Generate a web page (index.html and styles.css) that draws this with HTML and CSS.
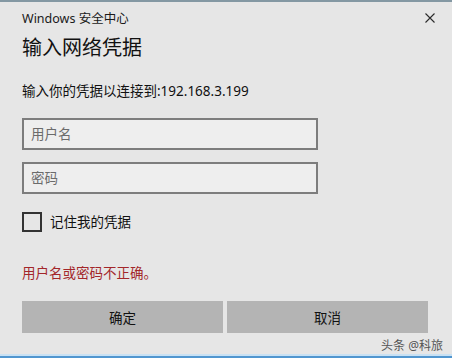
FILE: index.html
```html
<!DOCTYPE html>
<html lang="zh-CN">
<head>
<meta charset="utf-8">
<title>Windows 安全中心</title>
<link rel="stylesheet" href="styles.css">
</head>
<body>
<div class="dialog">
  <div class="top-edge"></div>
  <div class="content">
    <div class="title-row">
      <span class="title">Windows 安全中心</span>
      <svg class="close" width="10" height="10" viewBox="0 0 10 10"><path d="M0.5 0.5 L9.5 9.5 M9.5 0.5 L0.5 9.5" stroke="#2b2b2b" stroke-width="1.1" fill="none"/></svg>
    </div>
    <h1 class="heading">输入网络凭据</h1>
    <p class="subtitle">输入你的凭据以连接到:192.168.3.199</p>
    <div class="field first"><span class="placeholder">用户名</span></div>
    <div class="field second"><span class="placeholder">密码</span></div>
    <label class="remember"><span class="box"></span><span class="label-text">记住我的凭据</span></label>
    <p class="error">用户名或密码不正确。</p>
    <div class="buttons">
      <div class="btn">确定</div>
      <div class="btn">取消</div>
    </div>
    <div class="watermark-row"><span class="watermark">头条 @科旅</span></div>
  </div>
  <div class="bottom-edge"></div>
</div>
</body>
</html>
```
FILE: styles.css
```css
* { box-sizing: border-box; }
html, body {
  margin: 0;
  padding: 0;
  background: #e6e6e6;
}
body {
  font-family: "Noto Sans", "Noto Sans CJK SC", sans-serif;
  color: #1a1a1a;
}
.dialog {
  width: 452px;
  height: 358px;
  display: flex;
  flex-direction: column;
  background: #e6e6e6;
}
.top-edge {
  height: 2px;
  background: #8498a3;
}
.content {
  flex: 1;
  display: flex;
  flex-direction: column;
  padding: 0 24px 0 22px;
}
.title-row {
  display: flex;
  justify-content: space-between;
  align-items: center;
  margin-top: 9px;
  padding-right: 0;
  height: 16px;
}
.title {
  font-size: 12.5px;
  line-height: 16px;
  color: #1a1a1a;
}
.close {
  margin-right: -7px;
  margin-top: -2px;
}
.heading {
  margin: 8px 0 0;
  font-size: 20px;
  font-weight: normal;
  line-height: 26px;
  color: #111;
}
.subtitle {
  margin: 21px 0 0;
  font-size: 13.5px;
  line-height: 18px;
  color: #111;
}
.field {
  width: 296px;
  height: 32px;
  border: 2px solid #7d7d7d;
  background: #eeeeee;
  display: flex;
  align-items: center;
  padding-left: 7px;
}
.field.first { margin-top: 18px; }
.field.second { margin-top: 12px; }
.placeholder {
  font-size: 13.5px;
  line-height: 18px;
  color: #6b6b6b;
}
.remember {
  margin-top: 18px;
  display: flex;
  align-items: center;
  gap: 8px;
  height: 20px;
}
.box {
  width: 20px;
  height: 20px;
  border: 2px solid #333;
}
.label-text {
  font-size: 13.5px;
  line-height: 18px;
  color: #111;
}
.error {
  margin: 32px 0 0;
  font-size: 13.5px;
  line-height: 18px;
  color: #a3262a;
}
.buttons {
  margin-top: 19px;
  display: flex;
  gap: 4px;
}
.btn {
  width: 201px;
  height: 32px;
  background: #b4b4b4;
  display: flex;
  align-items: center;
  justify-content: center;
  font-size: 13.5px;
  color: #111;
}
.watermark-row {
  display: flex;
  justify-content: flex-end;
  margin-top: 5px;
  margin-right: -15px;
}
.watermark {
  font-size: 12px;
  line-height: 16px;
  color: #555;
}
.bottom-edge {
  height: 4px;
  border-top: 2px solid #c9e1f3;
  background: #5196cf;
}
```
